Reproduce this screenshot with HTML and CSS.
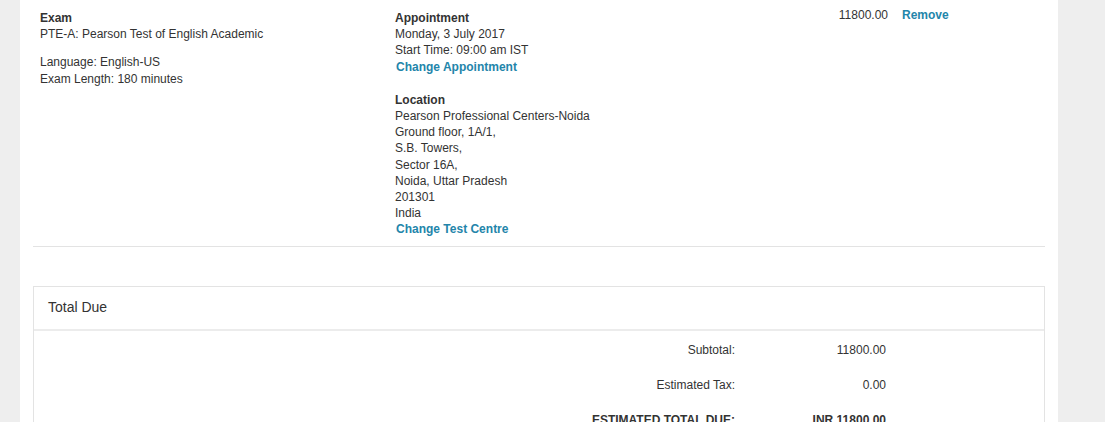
FILE: index.html
```html
<!DOCTYPE html>
<html>
<head>
<meta charset="utf-8">
<link rel="stylesheet" href="styles.css">
</head>
<body>
<div class="panel">
  <div class="item">
    <div class="col col-exam">
      <div class="block">
        <div class="label">Exam</div>
        <div>PTE-A: Pearson Test of English Academic</div>
      </div>
      <div class="block">
        <div>Language: English-US</div>
        <div>Exam Length: 180 minutes</div>
      </div>
    </div>
    <div class="col col-appt">
      <div class="block gap-line">
        <div class="label">Appointment</div>
        <div>Monday, 3 July 2017</div>
        <div>Start Time: 09:00 am IST</div>
        <a class="link">Change Appointment</a>
      </div>
      <div class="block">
        <div class="label">Location</div>
        <div>Pearson Professional Centers-Noida</div>
        <div>Ground floor, 1A/1,</div>
        <div>S.B. Towers,</div>
        <div>Sector 16A,</div>
        <div>Noida, Uttar Pradesh</div>
        <div>201301</div>
        <div>India</div>
        <a class="link">Change Test Centre</a>
      </div>
    </div>
    <div class="col col-price">11800.00</div>
    <div class="col col-remove"><a class="link">Remove</a></div>
  </div>

  <div class="total-box">
    <div class="total-head">Total Due</div>
    <div class="total-body">
      <div class="trow">
        <div class="tlabel">Subtotal:</div>
        <div class="tvalue">11800.00</div>
      </div>
      <div class="trow">
        <div class="tlabel">Estimated Tax:</div>
        <div class="tvalue">0.00</div>
      </div>
      <div class="trow grand">
        <div class="tlabel">ESTIMATED TOTAL DUE:</div>
        <div class="tvalue">INR 11800.00</div>
      </div>
    </div>
  </div>
</div>
</body>
</html>
```

FILE: styles.css
```css
html, body {
  margin: 0;
  padding: 0;
  background: #eeeeee;
}
body {
  font-family: "Liberation Sans", Arial, sans-serif;
  font-size: 12px;
  line-height: 16.2px;
  color: #333333;
}
.panel {
  margin: 0 47px 0 20px;
  background: #ffffff;
  padding: 10px 13px 40px 13px;
  min-height: 500px;
}
.item {
  display: grid;
  grid-template-columns: 355px 355px 143px auto;
  padding: 0 0 8px 7px;
  border-bottom: 1px solid #e3e3e3;
}
.block + .block {
  margin-top: 12px;
}
.col-appt .block + .block {
  margin-top: 17px;
}
.label {
  font-weight: bold;
  margin-top: -3px;
  padding-top: 3px;
}
.link {
  display: block;
  color: #2385aa;
  font-weight: bold;
  padding-left: 1px;
  cursor: pointer;
}
.col-price {
  text-align: right;
  padding-right: 5px;
  margin-top: -3px;
}
.col-remove {
  padding-left: 9px;
  margin-top: -3px;
}
.col-remove .link {
  padding-left: 0;
}
.total-box {
  margin-top: 39px;
  border: 1px solid #e3e3e3;
}
.total-head {
  font-size: 14px;
  line-height: 20px;
  padding: 10px 14px 12px 14px;
  border-bottom: 2px solid #ececec;
}
.total-body {
  padding-top: 11px;
}
.trow {
  display: grid;
  grid-template-columns: 1fr 151px 158px;
  margin-bottom: 19px;
}
.tlabel {
  text-align: right;
}
.tvalue {
  text-align: right;
}
.grand {
  font-weight: bold;
}
```
